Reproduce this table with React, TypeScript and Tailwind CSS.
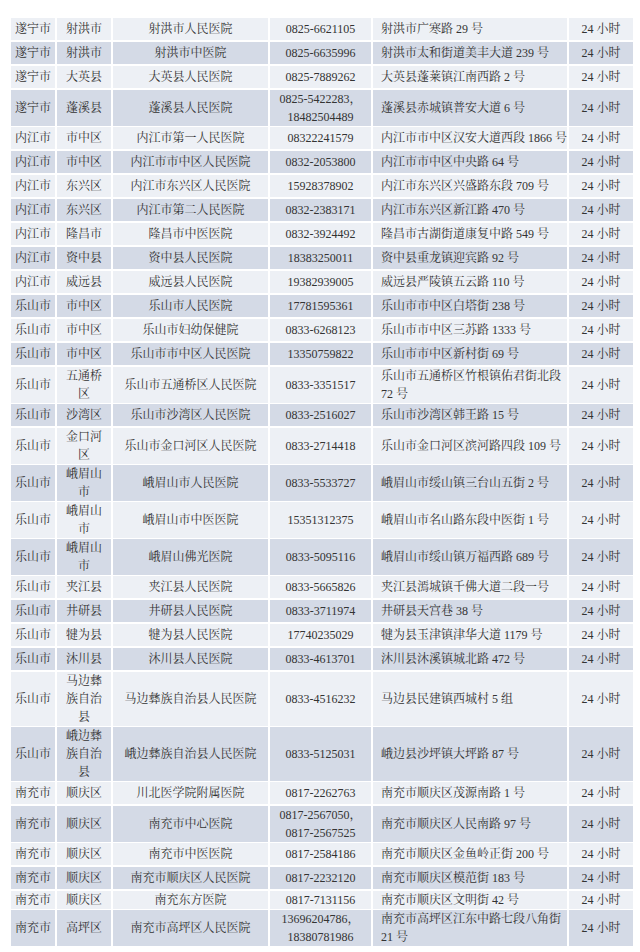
type Row = {
  city: string;
  district: string;
  hospital: string;
  phone: string;
  address: string;
  size: "s" | "d" | "t" | "x";
};

// lines are split with \n, same as the printed table
const ROWS: Row[] = [
  { city: "遂宁市", district: "射洪市", hospital: "射洪市人民医院", phone: "0825-6621105", address: "射洪市广寒路 29 号", size: "s" },
  { city: "遂宁市", district: "射洪市", hospital: "射洪市中医院", phone: "0825-6635996", address: "射洪市太和街道美丰大道 239 号", size: "s" },
  { city: "遂宁市", district: "大英县", hospital: "大英县人民医院", phone: "0825-7889262", address: "大英县蓬莱镇江南西路 2 号", size: "s" },
  { city: "遂宁市", district: "蓬溪县", hospital: "蓬溪县人民医院", phone: "0825-5422283，\n18482504489", address: "蓬溪县赤城镇普安大道 6 号", size: "d" },
  { city: "内江市", district: "市中区", hospital: "内江市第一人民医院", phone: "08322241579", address: "内江市市中区汉安大道西段 1866 号", size: "s" },
  { city: "内江市", district: "市中区", hospital: "内江市市中区人民医院", phone: "0832-2053800", address: "内江市市中区中央路 64 号", size: "s" },
  { city: "内江市", district: "东兴区", hospital: "内江市东兴区人民医院", phone: "15928378902", address: "内江市东兴区兴盛路东段 709 号", size: "s" },
  { city: "内江市", district: "东兴区", hospital: "内江市第二人民医院", phone: "0832-2383171", address: "内江市东兴区新江路 470 号", size: "s" },
  { city: "内江市", district: "隆昌市", hospital: "隆昌市中医医院", phone: "0832-3924492", address: "隆昌市古湖街道康复中路 549 号", size: "s" },
  { city: "内江市", district: "资中县", hospital: "资中县人民医院", phone: "18383250011", address: "资中县重龙镇迎宾路 92 号", size: "s" },
  { city: "内江市", district: "威远县", hospital: "威远县人民医院", phone: "19382939005", address: "威远县严陵镇五云路 110 号", size: "s" },
  { city: "乐山市", district: "市中区", hospital: "乐山市人民医院", phone: "17781595361", address: "乐山市市中区白塔街 238 号", size: "s" },
  { city: "乐山市", district: "市中区", hospital: "乐山市妇幼保健院", phone: "0833-6268123", address: "乐山市市中区三苏路 1333 号", size: "s" },
  { city: "乐山市", district: "市中区", hospital: "乐山市市中区人民医院", phone: "13350759822", address: "乐山市市中区新村街 69 号", size: "s" },
  { city: "乐山市", district: "五通桥\n区", hospital: "乐山市五通桥区人民医院", phone: "0833-3351517", address: "乐山市五通桥区竹根镇佑君街北段\n72 号", size: "d" },
  { city: "乐山市", district: "沙湾区", hospital: "乐山市沙湾区人民医院", phone: "0833-2516027", address: "乐山市沙湾区韩王路 15 号", size: "s" },
  { city: "乐山市", district: "金口河\n区", hospital: "乐山市金口河区人民医院", phone: "0833-2714418", address: "乐山市金口河区滨河路四段 109 号", size: "d" },
  { city: "乐山市", district: "峨眉山\n市", hospital: "峨眉山市人民医院", phone: "0833-5533727", address: "峨眉山市绥山镇三台山五街 2 号", size: "d" },
  { city: "乐山市", district: "峨眉山\n市", hospital: "峨眉山市中医医院", phone: "15351312375", address: "峨眉山市名山路东段中医街 1 号", size: "d" },
  { city: "乐山市", district: "峨眉山\n市", hospital: "峨眉山佛光医院", phone: "0833-5095116", address: "峨眉山市绥山镇万福西路 689 号", size: "d" },
  { city: "乐山市", district: "夹江县", hospital: "夹江县人民医院", phone: "0833-5665826", address: "夹江县漹城镇千佛大道二段一号", size: "s" },
  { city: "乐山市", district: "井研县", hospital: "井研县人民医院", phone: "0833-3711974", address: "井研县天宫巷 38 号", size: "s" },
  { city: "乐山市", district: "犍为县", hospital: "犍为县人民医院", phone: "17740235029", address: "犍为县玉津镇津华大道 1179 号", size: "s" },
  { city: "乐山市", district: "沐川县", hospital: "沐川县人民医院", phone: "0833-4613701", address: "沐川县沐溪镇城北路 472 号", size: "s" },
  { city: "乐山市", district: "马边彝\n族自治\n县", hospital: "马边彝族自治县人民医院", phone: "0833-4516232", address: "马边县民建镇西城村 5 组", size: "t" },
  { city: "乐山市", district: "峨边彝\n族自治\n县", hospital: "峨边彝族自治县人民医院", phone: "0833-5125031", address: "峨边县沙坪镇大坪路 87 号", size: "t" },
  { city: "南充市", district: "顺庆区", hospital: "川北医学院附属医院", phone: "0817-2262763", address: "南充市顺庆区茂源南路 1 号", size: "s" },
  { city: "南充市", district: "顺庆区", hospital: "南充市中心医院", phone: "0817-2567050，\n0817-2567525", address: "南充市顺庆区人民南路 97 号", size: "d" },
  { city: "南充市", district: "顺庆区", hospital: "南充市中医医院", phone: "0817-2584186", address: "南充市顺庆区金鱼岭正街 200 号", size: "s" },
  { city: "南充市", district: "顺庆区", hospital: "南充市顺庆区人民医院", phone: "0817-2232120", address: "南充市顺庆区模范街 183 号", size: "s" },
  { city: "南充市", district: "顺庆区", hospital: "南充东方医院", phone: "0817-7131156", address: "南充市顺庆区文明街 42 号", size: "x" },
  { city: "南充市", district: "高坪区", hospital: "南充市高坪区人民医院", phone: "13696204786，\n18380781986", address: "南充市高坪区江东中路七段八角街\n21 号", size: "d" },
];

const HEIGHTS = { s: "h-[22px]", d: "h-[35px]", t: "h-[53px]", x: "h-[17px]" };

const Cell = ({ text, className }: { text: string; className: string }) => (
  <div className={`flex items-center whitespace-pre-line leading-[18px] ${className}`}>
    <span>{text}</span>
  </div>
);

export default function App() {
  return (
    <div
      className="w-[640px] h-[952px] bg-white pt-[18px] pl-[11px] text-[12px] text-[#333333]"
      style={{ fontFamily: '"Liberation Serif", "Noto Serif CJK SC", "Noto Sans CJK SC", serif' }}
    >
      <div className="flex flex-col gap-[2px] w-[622px]">
        {ROWS.map((r, i) => {
          const bg = i % 2 === 0 ? "bg-[#edf0f5]" : "bg-[#d4dae6]";
          return (
            <div
              key={i}
              className={`grid grid-cols-[44px_54px_155px_101px_194px_64px] gap-x-[2px] ${HEIGHTS[r.size]}`}
            >
              <Cell text={r.city} className={`${bg} justify-center text-center`} />
              <Cell text={r.district} className={`${bg} justify-center text-center`} />
              <Cell text={r.hospital} className={`${bg} justify-center text-center`} />
              <Cell text={r.phone} className={`${bg} justify-center text-center`} />
              <Cell text={r.address} className={`${bg} justify-start pl-[8px]`} />
              <Cell text="24 小时" className={`${bg} justify-center text-center`} />
            </div>
          );
        })}
      </div>
    </div>
  );
}
